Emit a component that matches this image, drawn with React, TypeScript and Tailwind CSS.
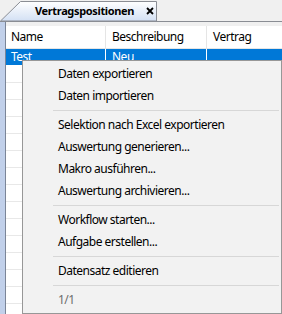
const FONT = { fontFamily: '"Noto Sans", "Open Sans", sans-serif' }

type MenuEntry = { label: string; disabled?: boolean } | 'sep'

const MENU: MenuEntry[] = [
  { label: 'Daten exportieren' },
  { label: 'Daten importieren' },
  'sep',
  { label: 'Selektion nach Excel exportieren' },
  { label: 'Auswertung generieren...' },
  { label: 'Makro ausführen...' },
  { label: 'Auswertung archivieren...' },
  'sep',
  { label: 'Workflow starten...' },
  { label: 'Aufgabe erstellen...' },
  'sep',
  { label: 'Datensatz editieren' },
  'sep',
  { label: '1/1', disabled: true },
]

const EMPTY_ROWS = Array.from({ length: 15 })

function Tab() {
  return (
    <div className="relative h-[21px] w-[157px] shrink-0 flex items-center">
      <svg className="absolute inset-0" width="157" height="21" viewBox="0 0 157 21">
        <defs>
          <linearGradient id="tabbg" x1="0" y1="0" x2="0" y2="1">
            <stop offset="0" stopColor="#ffffff" />
            <stop offset="1" stopColor="#d3e0f4" />
          </linearGradient>
        </defs>
        <path d="M0.5 21 L20.5 1.5 L156.5 1.5 L156.5 21 Z" fill="url(#tabbg)" stroke="#8a8d94" strokeWidth="1" />
      </svg>
      <span className="relative w-[111px] shrink-0 pl-[35px] text-[11px] font-bold tracking-[-0.35px] text-black leading-none whitespace-nowrap">
        Vertragspositionen
      </span>
      <svg className="relative ml-[35px] mt-[1px]" width="8" height="8" viewBox="0 0 8 8">
        <path d="M1 1 L7 7 M7 1 L1 7" stroke="#000" strokeWidth="1.8" />
      </svg>
    </div>
  )
}

function ContextMenu() {
  return (
    <div className="absolute left-[22px] top-[60px] w-[260px] border border-[#979797] bg-[#f2f2f2] py-[2px] tracking-[-0.5px]">
      {MENU.map((m, i) =>
        m === 'sep' ? (
          <div key={i} className="h-[7px] flex flex-col justify-center pl-[30px] pr-[2px]">
            <div className="h-px bg-[#d7d7d7]" />
          </div>
        ) : (
          <div
            key={i}
            className={`h-[22px] flex items-center pl-[35px] text-[12px] ${m.disabled ? 'text-[#6d6d6d]' : 'text-black'}`}
          >
            {m.label}
          </div>
        )
      )}
    </div>
  )
}

export default function App() {
  return (
    <div className="relative w-[282px] h-[314px] overflow-hidden bg-[#f0f0f0]" style={FONT}>
      {/* tab strip */}
      <div className="h-[22px] shrink-0 border-b border-[#8a8d94] flex items-end">
        <Tab />
      </div>

      <div className="flex h-[292px] overflow-hidden">
        <div className="w-[5px] shrink-0 bg-[#c1d0ea]" />
        <div className="flex-1 flex flex-col border-l border-[#7b8598] bg-white tracking-[-0.5px]">
          <div className="h-[4px] shrink-0 bg-[#f0f0f0]" />
          {/* header */}
          <div className="h-[23px] shrink-0 flex border-b border-[#e5e5e5] text-[12px] text-black">
            <div className="w-[100px] border-r border-[#e5e5e5] flex items-center pl-[5px]">Name</div>
            <div className="w-[101px] border-r border-[#e5e5e5] flex items-center pl-[6px]">Beschreibung</div>
            <div className="flex-1 flex items-center pl-[6px]">Vertrag</div>
          </div>
          {/* selected row */}
          <div className="h-[17px] shrink-0 flex bg-[#0078d7] text-white text-[12px] border-b border-white">
            <div className="w-[100px] border-r border-white flex items-center pl-[5px]">Test</div>
            <div className="w-[101px] border-r border-white flex items-center pl-[6px]">Neu</div>
            <div className="flex-1" />
          </div>
          {EMPTY_ROWS.map((_, i) => (
            <div key={i} className="h-[17px] shrink-0 border-b border-[#e8e8e8]" />
          ))}
        </div>
      </div>

      <ContextMenu />
    </div>
  )
}
